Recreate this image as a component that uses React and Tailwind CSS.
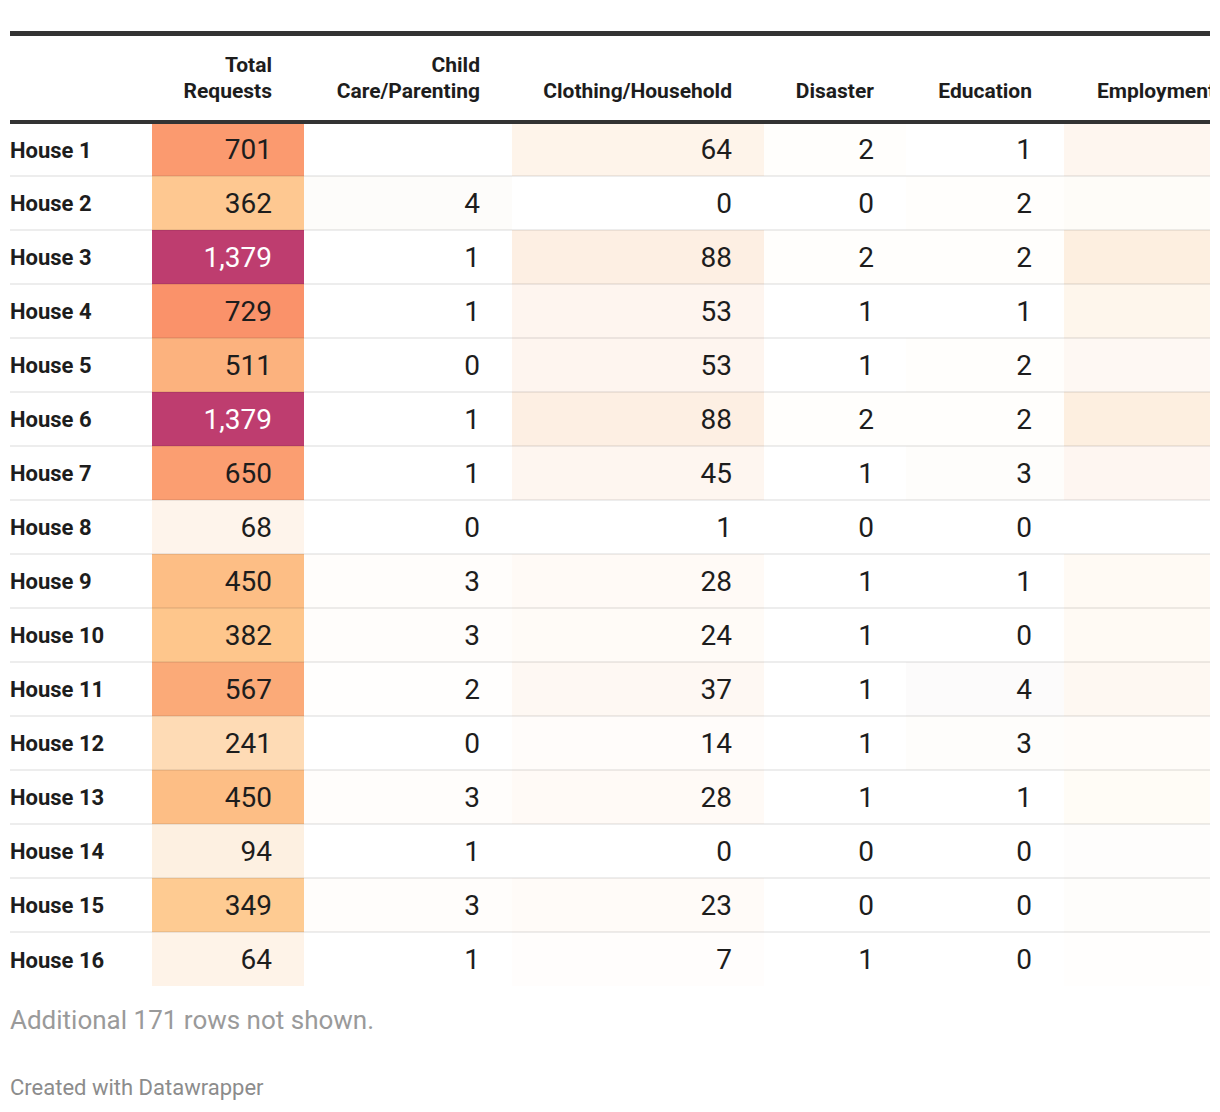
import React from 'react';

// heatmap table, datawrapper style
const rows = [
  { name: 'House 1', total: ['701', 'bg-[#fb9a6f]'], child: ['', ''], cloth: ['64', 'bg-[#fef4ea]'], dis: ['2', 'bg-[#fffefc]'], edu: ['1', ''], emp: 'bg-[#fef6ef]' },
  { name: 'House 2', total: ['362', 'bg-[#fec891]'], child: ['4', 'bg-[#fdfcfa]'], cloth: ['0', ''], dis: ['0', ''], edu: ['2', 'bg-[#fffefc]'], emp: 'bg-[#fefcf8]' },
  { name: 'House 3', total: ['1,379', 'bg-[#be3d6f]', true], child: ['1', ''], cloth: ['88', 'bg-[#fdefe3]'], dis: ['2', 'bg-[#fffefc]'], edu: ['2', 'bg-[#fffefc]'], emp: 'bg-[#fdefe0]' },
  { name: 'House 4', total: ['729', 'bg-[#fa926a]'], child: ['1', ''], cloth: ['53', 'bg-[#fef5ef]'], dis: ['1', ''], edu: ['1', ''], emp: 'bg-[#fef6ec]' },
  { name: 'House 5', total: ['511', 'bg-[#fcb27e]'], child: ['0', ''], cloth: ['53', 'bg-[#fef5ef]'], dis: ['1', ''], edu: ['2', 'bg-[#fffefc]'], emp: 'bg-[#fef8f3]' },
  { name: 'House 6', total: ['1,379', 'bg-[#be3d6f]', true], child: ['1', ''], cloth: ['88', 'bg-[#fdefe3]'], dis: ['2', 'bg-[#fffefc]'], edu: ['2', 'bg-[#fffefc]'], emp: 'bg-[#fdefe0]' },
  { name: 'House 7', total: ['650', 'bg-[#fb9e71]'], child: ['1', ''], cloth: ['45', 'bg-[#fef6f0]'], dis: ['1', ''], edu: ['3', 'bg-[#fefdfb]'], emp: 'bg-[#fef6f1]' },
  { name: 'House 8', total: ['68', 'bg-[#fef4eb]'], child: ['0', ''], cloth: ['1', ''], dis: ['0', ''], edu: ['0', ''], emp: '' },
  { name: 'House 9', total: ['450', 'bg-[#fdbe85]'], child: ['3', 'bg-[#fffdfb]'], cloth: ['28', 'bg-[#fffaf6]'], dis: ['1', ''], edu: ['1', ''], emp: 'bg-[#fffaf4]' },
  { name: 'House 10', total: ['382', 'bg-[#fec68c]'], child: ['3', 'bg-[#fffdfb]'], cloth: ['24', 'bg-[#fffbf7]'], dis: ['1', ''], edu: ['0', ''], emp: 'bg-[#fffaf4]' },
  { name: 'House 11', total: ['567', 'bg-[#fbaa78]'], child: ['2', 'bg-[#fffefd]'], cloth: ['37', 'bg-[#fef8f3]'], dis: ['1', ''], edu: ['4', 'bg-[#fcfbfb]'], emp: 'bg-[#fef8f2]' },
  { name: 'House 12', total: ['241', 'bg-[#fedbb5]'], child: ['0', ''], cloth: ['14', 'bg-[#fffcfa]'], dis: ['1', ''], edu: ['3', 'bg-[#fefdfb]'], emp: 'bg-[#fffcf9]' },
  { name: 'House 13', total: ['450', 'bg-[#fdbe85]'], child: ['3', 'bg-[#fffdfb]'], cloth: ['28', 'bg-[#fffaf6]'], dis: ['1', ''], edu: ['1', ''], emp: 'bg-[#fffcf6]' },
  { name: 'House 14', total: ['94', 'bg-[#fdf0e1]'], child: ['1', ''], cloth: ['0', ''], dis: ['0', ''], edu: ['0', ''], emp: 'bg-[#fefdfc]' },
  { name: 'House 15', total: ['349', 'bg-[#fecb92]'], child: ['3', 'bg-[#fffdfb]'], cloth: ['23', 'bg-[#fffbf8]'], dis: ['0', ''], edu: ['0', ''], emp: 'bg-[#fefdfb]' },
  { name: 'House 16', total: ['64', 'bg-[#fef3e8]'], child: ['1', ''], cloth: ['7', 'bg-[#fffdfc]'], dis: ['1', ''], edu: ['0', ''], emp: 'bg-[#fffefd]' },
];

const rowCls = (last) => (last ? 'h-[54px] pt-[1px]' : 'h-[54px] pt-[1px] border-b-2 border-black/[0.07]');

const Num = ({ cell, last }) => {
  const [val, bg, dark] = cell;
  return (
    <td className={`pr-[32px] text-right align-middle text-[28px] ${bg} ${dark ? 'text-white' : 'text-[#1d1d1d]'} ${rowCls(last)}`}>
      {val}
    </td>
  );
};

export default function App() {
  return (
    <div className="bg-white px-[10px] pt-[31px] pb-4 font-['Roboto',sans-serif]">
      <div className="w-[1200px] overflow-hidden border-t-[5px] border-[#333]">
        <table className="w-[1237px] table-fixed border-collapse">
          <colgroup>
            <col className="w-[142px]" />
            <col className="w-[152px]" />
            <col className="w-[208px]" />
            <col className="w-[252px]" />
            <col className="w-[142px]" />
            <col className="w-[158px]" />
            <col className="w-[183px]" />
          </colgroup>
          <thead>
            <tr className="border-b-4 border-[#333] text-[21px] font-bold leading-[26px] text-[#1d1d1d]">
              <th className="h-[86px]"></th>
              <th className="pr-[32px] pb-[16px] text-right align-bottom">Total<br />Requests</th>
              <th className="pr-[32px] pb-[16px] text-right align-bottom">Child<br />Care/Parenting</th>
              <th className="pr-[32px] pb-[16px] text-right align-bottom">Clothing/Household</th>
              <th className="pr-[32px] pb-[16px] text-right align-bottom">Disaster</th>
              <th className="pr-[32px] pb-[16px] text-right align-bottom">Education</th>
              <th className="pb-[16px] pl-[33px] text-left align-bottom whitespace-nowrap">Employment</th>
            </tr>
          </thead>
          <tbody>
            {rows.map((r, i) => {
              const last = i === rows.length - 1;
              return (
                <tr key={r.name}>
                  <td className={`text-left align-middle text-[22px] font-bold text-[#1d1d1d] ${rowCls(last)}`}>
                    {r.name}
                  </td>
                  <Num cell={r.total} last={last} />
                  <Num cell={r.child} last={last} />
                  <Num cell={r.cloth} last={last} />
                  <Num cell={r.dis} last={last} />
                  <Num cell={r.edu} last={last} />
                  <td className={`${r.emp} ${rowCls(last)}`}></td>
                </tr>
              );
            })}
          </tbody>
        </table>
      </div>
      <p className="mt-[19px] text-[26px] leading-[30px] text-[#9a9a9a]">Additional 171 rows not shown.</p>
      <p className="mt-[40px] text-[22px] leading-[26px] text-[#8c8c8c]">Created with Datawrapper</p>
    </div>
  );
}
